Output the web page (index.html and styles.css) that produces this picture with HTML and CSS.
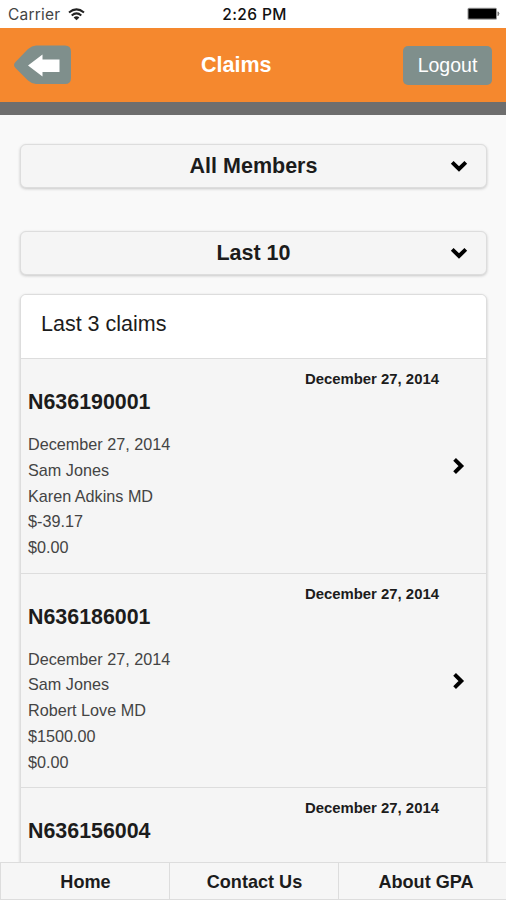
FILE: index.html
```html
<!DOCTYPE html>
<html lang="en">
<head>
<meta charset="utf-8">
<title>Claims</title>
<link rel="stylesheet" href="styles.css">
</head>
<body>
<div class="status">
  <div class="carrier"><span>Carrier</span>
    <svg width="17" height="13" viewBox="0 0 17 13" fill="none" stroke="#222" stroke-width="2"><path d="M1 4.600Q8.500-1.800 16 4.600M3.700 7.500Q8.500 3.300 13.300 7.500"/><path d="M8.500 12.300L5.600 9.500Q8.500 7.200 11.400 9.500Z" fill="#222" stroke="none"/></svg>
  </div>
  <span class="time">2:26 PM</span>
  <svg class="battery" width="34" height="14" viewBox="0 0 34 14"><rect x=".5" y=".7" width="29.500" height="12" rx="1.500" fill="#999"/><rect x="1.500" y="1.800" width="27.500" height="9.800" fill="#000"/><path d="M31 4.800Q33 6.700 31 8.600Z" fill="#666" stroke="#777"/></svg>
</div>
<header class="bar">
  <svg class="back" width="58" height="40" viewBox="0 0 58 40"><path d="M1.500 17L14 4Q18 .5 22 .5H51Q57 .5 57 6.500V33Q57 39 51 39H22Q18 39 14 35.500L1.500 23Q-1.500 20 1.500 17Z" fill="#7f8f8c"/><path d="M14 20.500L28.500 9.500V14.500H45.500V27H28.500V31.500Z" fill="#fff"/></svg>
  <h1>Claims</h1>
  <button class="logout">Logout</button>
</header>
<main>
  <div class="select"><span>All Members</span><svg width="18" height="13" viewBox="0 0 18 13"><path d="M2.200 2.400L9 9L15.800 2.400" fill="none" stroke="#000" stroke-width="3.900"/></svg></div>
  <div class="select second"><span>Last 10</span><svg width="18" height="13" viewBox="0 0 18 13"><path d="M2.200 2.400L9 9L15.800 2.400" fill="none" stroke="#000" stroke-width="3.900"/></svg></div>
  <section class="list">
    <div class="heading">Last 3 claims</div>
    <article class="claim">
      <div class="date">December 27, 2014</div>
      <h2>N636190001</h2>
      <p>December 27, 2014</p><p>Sam Jones</p><p>Karen Adkins MD</p><p>$-39.17</p><p>$0.00</p>
      <svg class="go" width="13" height="18" viewBox="0 0 13 18"><path d="M2.600 2.400L9.300 9L2.600 15.600" fill="none" stroke="#000" stroke-width="3.900"/></svg>
    </article>
    <article class="claim">
      <div class="date">December 27, 2014</div>
      <h2>N636186001</h2>
      <p>December 27, 2014</p><p>Sam Jones</p><p>Robert Love MD</p><p>$1500.00</p><p>$0.00</p>
      <svg class="go" width="13" height="18" viewBox="0 0 13 18"><path d="M2.600 2.400L9.300 9L2.600 15.600" fill="none" stroke="#000" stroke-width="3.900"/></svg>
    </article>
    <article class="claim">
      <div class="date">December 27, 2014</div>
      <h2>N636156004</h2>
    </article>
  </section>
</main>
<nav class="tabs"><a>Home</a><a>Contact Us</a><a>About GPA</a></nav>
</body>
</html>
```
FILE: styles.css
```css
* { box-sizing: border-box; margin: 0; padding: 0; }
body {
  width: 506px; height: 900px; overflow: hidden;
  display: flex; flex-direction: column;
  background: #f9f9f9; color: #1c1c1c;
  font-family: "Liberation Sans", Arial, sans-serif;
}
.status {
  flex: none; height: 28px; background: #fff; padding: 0 5px 0 8px;
  display: grid; grid-template-columns: 1fr auto 1fr; align-items: center;
}
.carrier { display: flex; align-items: center; gap: 8px; font: 15.5px "Inter", sans-serif; color: #444; letter-spacing: .2px; }
.time { font: 500 15.5px "Inter", sans-serif; letter-spacing: .4px; color: #111; }
.battery { justify-self: end; }
.bar {
  flex: none; height: 87px; background: #f5882e; border-bottom: 13px solid #6e6e6e;
  display: grid; grid-template-columns: 187px auto 1fr; align-items: center;
  padding: 0 14px;
}
h1 { font-size: 21.5px; line-height: 24px; color: #fff; }
.back { display: block; }
.logout {
  justify-self: end; width: 89px; height: 39px; border: 0; border-radius: 5px;
  background: #7f8f8c; color: #fff; font: 19.5px "Liberation Sans", Arial, sans-serif;
}
main { flex: 1; min-height: 0; overflow: hidden; padding: 29px 19px 0 20px; }
.select {
  display: grid; grid-template-columns: 1fr auto 1fr; align-items: center;
  height: 44px; padding: 0 18px; border: 1px solid #ddd; border-radius: 6px;
  background: #f5f5f5; box-shadow: 0 1px 3px rgba(0,0,0,.2);
  font-size: 21.5px; font-weight: bold;
}
.select span { grid-column: 2; padding-top: 1px; }
.select svg { justify-self: end; }
.second { margin-top: 43px; }
.list {
  margin-top: 19px; height: 700px; border: 1px solid #ddd; border-radius: 6px;
  box-shadow: 0 1px 3px rgba(0,0,0,.2); background: #f5f5f5; overflow: hidden;
}
.heading { height: 63px; padding: 0 20px; background: #fff; font-size: 21.5px; line-height: 58px; }
.claim {
  position: relative; height: 214.5px; border-top: 1.5px solid #ddd; padding: 11px 47px 0 7px;
}
.date { text-align: right; font-size: 14.9px; line-height: 18px; font-weight: bold; }
h2 { font-size: 21.4px; line-height: 28px; margin-bottom: 16px; }
.claim p { font-size: 16.2px; line-height: 25.8px; color: #444; }
.go { position: absolute; right: 21px; top: 98px; }
.tabs {
  flex: none; height: 38px; display: grid; grid-template-columns: 169px 169px 1fr;
  background: #f6f6f6; border-top: 1px solid #ddd; border-bottom: 1px solid #ddd;
  font-size: 18.1px; font-weight: bold; line-height: 38px; text-align: center;
}
.tabs a { border-left: 1px solid #ddd; padding-left: 1px; }
.tabs a:last-child { padding-left: 7px; }
```
